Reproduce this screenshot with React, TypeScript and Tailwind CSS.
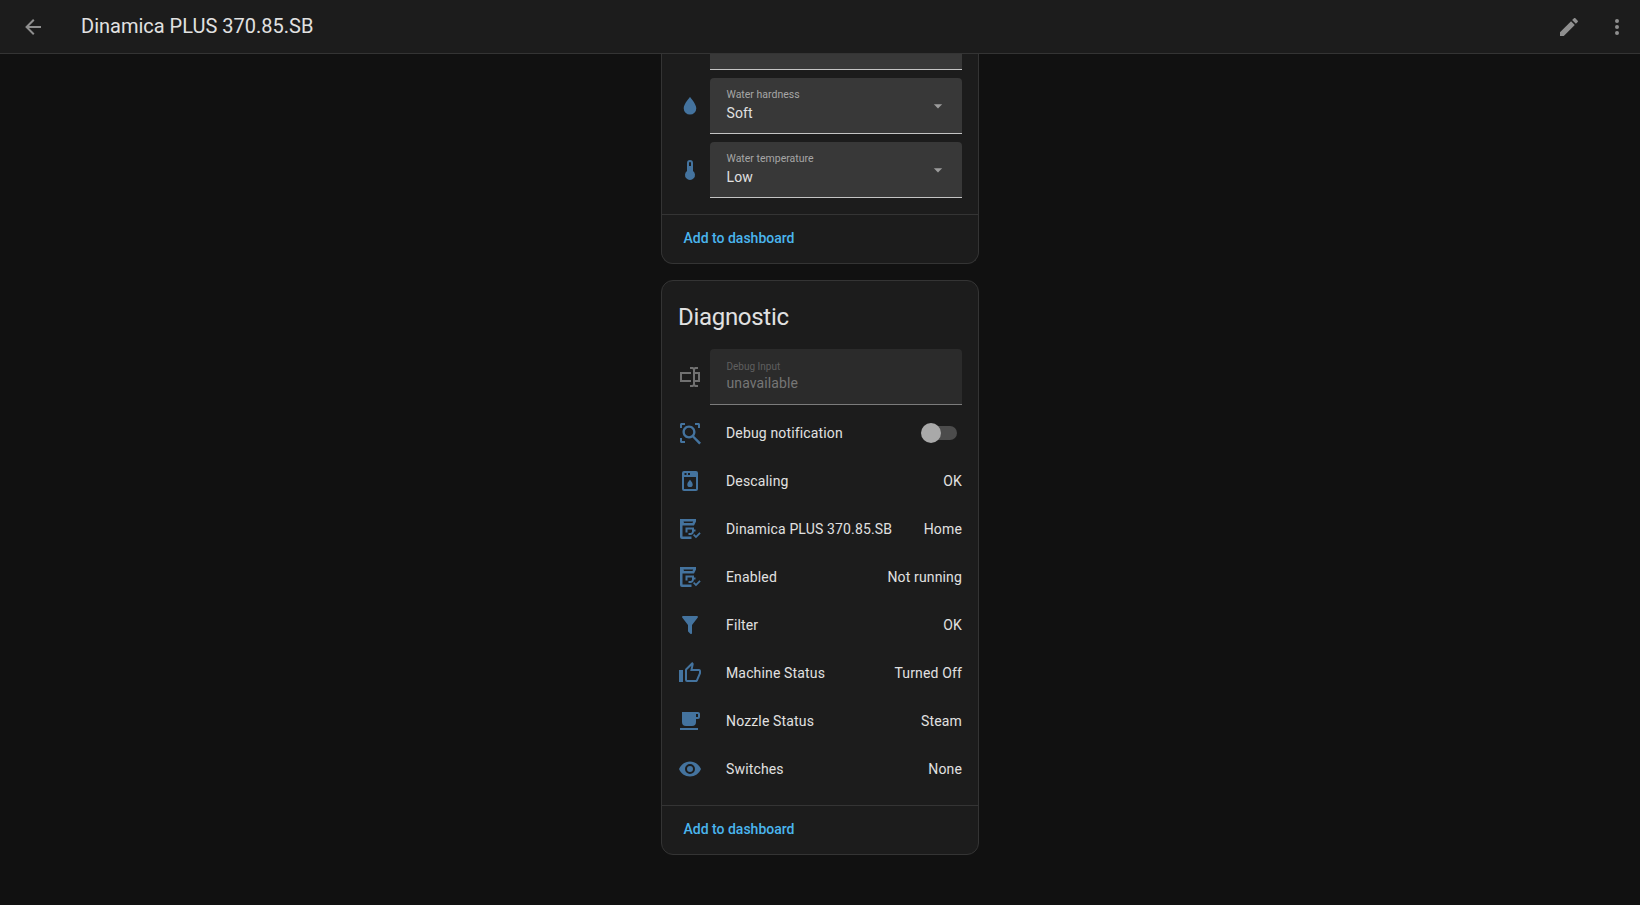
const paths = {
  back: "M20,11V13H8L13.5,18.5L12.08,19.92L4.16,12L12.08,4.08L13.5,5.5L8,11H20Z",
  pencil: "M20.71,7.04C21.1,6.65 21.1,6 20.71,5.63L18.37,3.29C18,2.9 17.35,2.9 16.96,3.29L15.12,5.12L18.87,8.87M3,17.25V21H6.75L17.81,9.93L14.06,6.18L3,17.25Z",
  dots: "M12,16A2,2 0 0,1 14,18A2,2 0 0,1 12,20A2,2 0 0,1 10,18A2,2 0 0,1 12,16M12,10A2,2 0 0,1 14,12A2,2 0 0,1 12,14A2,2 0 0,1 10,12A2,2 0 0,1 12,10M12,4A2,2 0 0,1 14,6A2,2 0 0,1 12,8A2,2 0 0,1 10,6A2,2 0 0,1 12,4Z",
  water: "M12,20.5A6.3,6.3 0 0,1 5.7,14.2C5.7,10 12,3 12,3C12,3 18.3,10 18.3,14.2A6.3,6.3 0 0,1 12,20.5Z",
  thermometer: "M15 13V5A3 3 0 0 0 9 5V13A5 5 0 1 0 15 13M12 4A1 1 0 0 1 13 5V8H11V5A1 1 0 0 1 12 4Z",
  textbox: "M17,7H22V17H17V19A1,1 0 0,0 18,20H20V22H17.5C16.95,22 16,21.55 16,21C16,21.55 15.05,22 14.5,22H12V20H14A1,1 0 0,0 15,19V5A1,1 0 0,0 14,4H12V2H14.5C15.05,2 16,2.45 16,3C16,2.45 16.95,2 17.5,2H20V4H18A1,1 0 0,0 17,5V7M2,7H13V9H4V15H13V17H2V7M20,15V9H17V15H20Z",
  scan: "M7 22H3.5C2.7 22 2 21.3 2 20.5V17H4V20H7V22M17 2H20.5C21.3 2 22 2.7 22 3.5V7H20V4H17V2M7 2V4H4V7H2V3.5C2 2.7 2.7 2 3.5 2H7M11 4.5C14.6 4.5 17.5 7.4 17.5 11C17.5 12.5 17 13.8 16.2 14.9L23 21.7L21.2 23.5L14.5 16.5C13.5 17.1 12.3 17.5 11 17.5C7.4 17.5 4.5 14.6 4.5 11C4.5 7.4 7.4 4.5 11 4.5M11 6.8C8.7 6.8 6.8 8.7 6.8 11C6.8 13.3 8.7 15.2 11 15.2C13.3 15.2 15.2 13.3 15.2 11C15.2 8.7 13.3 6.8 11 6.8Z",
  descale: "M6,2H18A2,2 0 0,1 20,4V20A2,2 0 0,1 18,22H6A2,2 0 0,1 4,20V4A2,2 0 0,1 6,2M6.5,4V6H8.5V4H6.5M10,4V6H12V4H10M6,8V20H18V8H6M12,10.8C12,10.8 14.7,13.6 14.7,15.4A2.7,2.7 0 0,1 9.3,15.4C9.3,13.6 12,10.8 12,10.8Z",
  maker: "M2,2H18V4.5L16,8.5H4.5V19.5H13.5V22H4A2,2 0 0,1 2,20V2M5.5,4.5L6,6H14.5L15.2,4.5H5.5M7.5,10.5H16V12.5H17.5V14.5H16C15.8,16.5 14.5,18 12.5,18H10.5V16H12.5C13.3,16 14,15.3 14,14.5V12.5H9.5V15.5H7.5V10.5M15,18.2L16.2,17L18,18.8L21.4,15.2L22.7,16.4L18,21.2L15,18.2Z",
  filter: "M14,12V19.88C14.04,20.18 13.94,20.5 13.71,20.71C13.32,21.1 12.69,21.1 12.3,20.71L10.29,18.7C10.06,18.47 9.96,18.16 10,17.87V12H9.97L4.21,4.62C3.87,4.19 3.95,3.56 4.38,3.22C4.57,3.08 4.78,3 5,3V3H19V3C19.22,3 19.43,3.08 19.62,3.22C20.05,3.56 20.13,4.19 19.79,4.62L14.03,12H14Z",
  thumb: "M5,9V21H1V9H5M9,21A2,2 0 0,1 7,19V9C7,8.45 7.22,7.95 7.59,7.59L14.17,1L15.23,2.06C15.5,2.33 15.67,2.7 15.67,3.11L15.64,3.43L14.69,8H21C22.11,8 23,8.9 23,10V12C23,12.26 22.95,12.5 22.86,12.73L19.84,19.78C19.54,20.5 18.83,21 18,21H9M9,19H18.03L21,12V10H12.21L13.34,4.68L9,9.03V19Z",
  coffee: "M2,21H20V19H2M20,8H18V5H20M20,3H4V13A4,4 0 0,0 8,17H14A4,4 0 0,0 18,13V10H20A2,2 0 0,0 22,8V5C22,3.89 21.1,3 20,3Z",
  eye: "M12,9A3,3 0 0,0 9,12A3,3 0 0,0 12,15A3,3 0 0,0 15,12A3,3 0 0,0 12,9M12,17A5,5 0 0,1 7,12A5,5 0 0,1 12,7A5,5 0 0,1 17,12A5,5 0 0,1 12,17M12,4.5C7,4.5 2.73,7.61 1,12C2.73,16.39 7,19.5 12,19.5C17,19.5 21.27,16.39 23,12C21.27,7.61 17,4.5 12,4.5Z",
  menuDown: "M7,10L12,15L17,10H7Z",
};

function Icon({ d, className = "w-6 h-6 text-[#44739e]" }: { d: string; className?: string }) {
  return (
    <svg viewBox="0 0 24 24" fill="currentColor" fillRule="evenodd" className={"shrink-0 overflow-visible " + className}>
      <path d={d} />
    </svg>
  );
}

function SelectRow({ icon, label, value }: { icon: string; label: string; value: string }) {
  return (
    <div className="flex items-center">
      <div className="w-8 shrink-0">
        <Icon d={icon} />
      </div>
      <div className="relative flex-1 h-14 bg-[#383838] rounded-t border-b border-[#c4c4c4] px-4 pt-[10px]">
        <div className="text-[10.5px] leading-[14px] pl-[0.5px] text-[#a6a6a6]">{label}</div>
        <div className="text-sm leading-5 mt-[1px] pl-[0.5px] tracking-[0.15px] text-[#e1e1e1]">{value}</div>
        <Icon d={paths.menuDown} className="absolute right-[14px] top-[18px] w-5 h-5 text-[#9c9c9c]" />
      </div>
    </div>
  );
}

function StateRow({ icon, name, value }: { icon: string; name: string; value: string }) {
  return (
    <div className="flex items-center h-10 text-sm tracking-[0.15px] text-[#e1e1e1]">
      <div className="w-12 shrink-0">
        <Icon d={icon} />
      </div>
      <span className="flex-1">{name}</span>
      <span>{value}</span>
    </div>
  );
}

function CardFooter() {
  return (
    <div className="h-[49px] pb-0.5 flex items-center pl-[21.5px] border-t border-[#343434] text-sm font-medium text-[#4ab5ee]">
      Add to dashboard
    </div>
  );
}

const diagnostics = [
  { icon: paths.descale, name: "Descaling", value: "OK" },
  { icon: paths.maker, name: "Dinamica PLUS 370.85.SB", value: "Home" },
  { icon: paths.maker, name: "Enabled", value: "Not running" },
  { icon: paths.filter, name: "Filter", value: "OK" },
  { icon: paths.thumb, name: "Machine Status", value: "Turned Off" },
  { icon: paths.coffee, name: "Nozzle Status", value: "Steam" },
  { icon: paths.eye, name: "Switches", value: "None" },
];

export default function App() {
  return (
    <div className="h-[905px] overflow-hidden bg-[#111111] font-['Roboto',sans-serif]">
      <header className="h-[54px] flex items-center bg-[#1c1c1c] border-b border-[#343434]">
        <div className="w-[81px] pl-[21px] shrink-0">
          <Icon d={paths.back} className="w-6 h-6 text-[#8f8f8f]" />
        </div>
        <h1 className="flex-1 pb-0.5 text-xl text-[#e1e1e1]">Dinamica PLUS 370.85.SB</h1>
        <Icon d={paths.pencil} className="w-6 h-6 text-[#8f8f8f] mr-6" />
        <Icon d={paths.dots} className="w-6 h-6 text-[#8f8f8f] mr-[11px]" />
      </header>

      <main className="flex flex-col items-center gap-4">
        <section className="w-[318px] bg-[#1c1c1c] border-x border-b border-[#343434] rounded-b-xl">
          <div className="px-4 pb-4 flex flex-col gap-2">
            <div className="ml-8 h-4 bg-[#383838] border-b border-[#c4c4c4]" />
            <SelectRow icon={paths.water} label="Water hardness" value="Soft" />
            <SelectRow icon={paths.thermometer} label="Water temperature" value="Low" />
          </div>
          <CardFooter />
        </section>

        <section className="w-[318px] bg-[#1c1c1c] border border-[#343434] rounded-xl">
          <h2 className="h-[68px] pl-4 pt-5 text-2xl leading-8 tracking-[-0.3px] text-[#e1e1e1]">Diagnostic</h2>
          <div className="px-4 pb-4 flex flex-col gap-2">
            <div className="flex items-center">
              <div className="w-8 shrink-0">
                <Icon d={paths.textbox} className="w-6 h-6 text-[#707070]" />
              </div>
              <div className="flex-1 h-14 bg-[#2b2b2b] rounded-t border-b border-[#7c7c7c] px-4 pt-[11px]">
                <div className="text-[10px] leading-[14px] pl-[0.5px] text-[#5f5f5f]">Debug Input</div>
                <div className="text-sm leading-5 -mt-[1px] pl-[0.5px] tracking-[0.1px] text-[#767676]">unavailable</div>
              </div>
            </div>
            <div className="flex items-center h-10 text-sm tracking-[0.15px] text-[#e1e1e1]">
              <div className="w-12 shrink-0">
                <Icon d={paths.scan} />
              </div>
              <span className="flex-1">Debug notification</span>
              <div className="relative w-8 h-3.5 mr-[5px] rounded-full bg-[#4c4c4c]">
                <div className="absolute -left-1 -top-[3px] w-5 h-5 rounded-full bg-[#a9a9a9]" />
              </div>
            </div>
            {diagnostics.map((d) => (
              <StateRow key={d.name} icon={d.icon} name={d.name} value={d.value} />
            ))}
          </div>
          <CardFooter />
        </section>
      </main>
    </div>
  );
}
